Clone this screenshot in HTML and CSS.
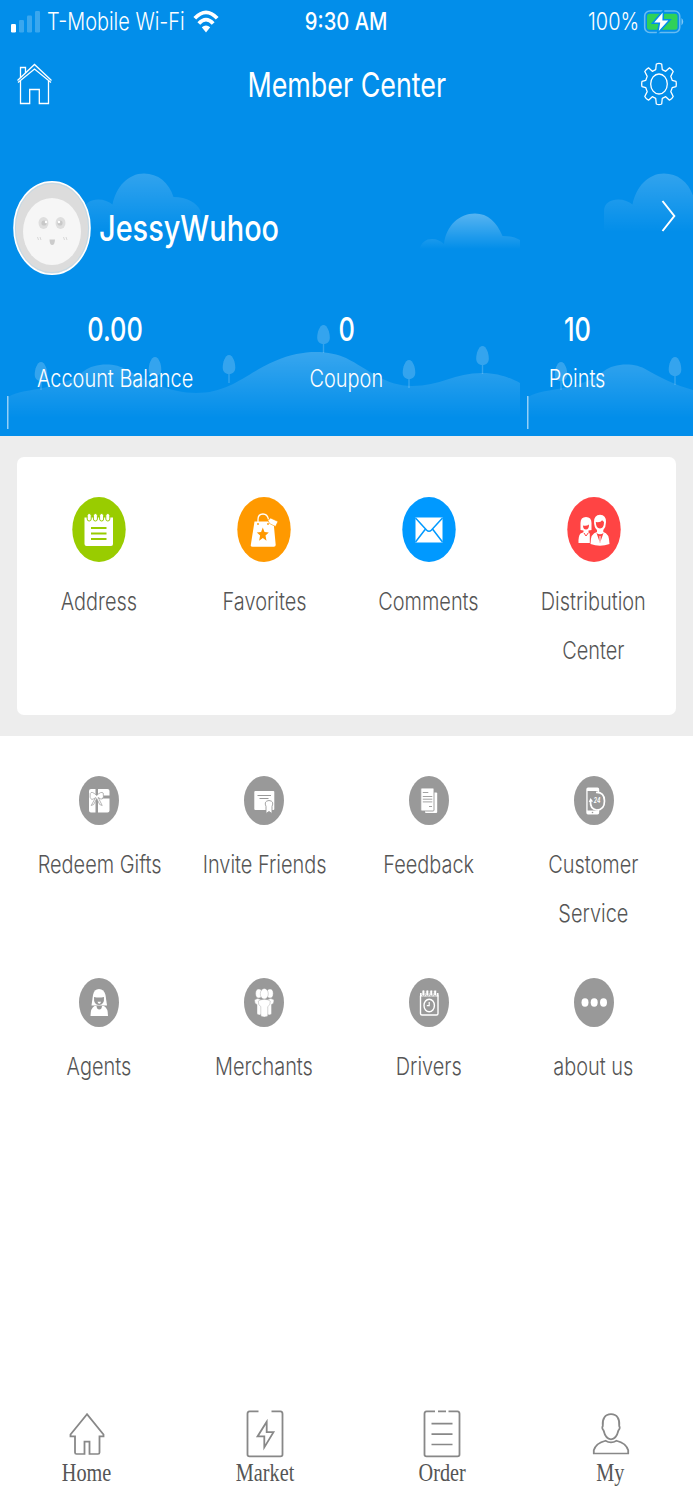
FILE: index.html
```html
<!DOCTYPE html>
<html lang="en">
<head>
<meta charset="utf-8">
<title>Member Center</title>
<link rel="stylesheet" href="styles.css">
</head>
<body>
<div class="app">
  <header class="hero">
    <svg class="scene" viewBox="0 0 693 436" width="693" height="436" aria-hidden="true">
      <defs>
        <linearGradient id="hill" gradientUnits="userSpaceOnUse" x1="0" y1="350" x2="0" y2="418">
          <stop offset="0" stop-color="#fff" stop-opacity=".22"/><stop offset=".5" stop-color="#fff" stop-opacity=".11"/><stop offset="1" stop-color="#fff" stop-opacity="0"/>
        </linearGradient>
        <linearGradient id="cloudA" gradientUnits="userSpaceOnUse" x1="0" y1="173" x2="0" y2="232">
          <stop offset="0" stop-color="#fff" stop-opacity=".19"/><stop offset="1" stop-color="#fff" stop-opacity="0"/>
        </linearGradient>
        <linearGradient id="cloudB" gradientUnits="userSpaceOnUse" x1="0" y1="213" x2="0" y2="249">
          <stop offset="0" stop-color="#fff" stop-opacity=".34"/><stop offset="1" stop-color="#fff" stop-opacity="0"/>
        </linearGradient>
        <g id="tree"><path d="M0-9.500C4-9.500 6.300-2 6.300 3 6.300 7 4 9.500 0 9.500S-6.300 7-6.300 3C-6.300-2-4-9.500 0-9.500z"/><path d="M-.7 9.500h1.400v9h-1.400z"/></g>
        <g id="tile">
          <path fill="url(#cloudA)" d="M84 232V211C84 203 91 199.500 98 199.500c6 0 11 2 14.500 5C116 187 128 173.500 144 173.500c14 0 25 9 29.500 23.500 13 0 24 6 27 14V232z"/>
          <path fill="url(#cloudB)" d="M419 251C421 242 426 239 432 239c5 0 9 2 12 5C446 226 459 213.500 475 213.500c13 0 22 9 27.500 22.500 8 0 13 1.500 17.500 4V251z"/>
          <path fill="url(#hill)" d="M8 397C18 391 30 391 45 387.500 64 384 76 378 84 371 94 363 115 362 127 370 145 380 170 393 196 393 230 393 245 374 275 361 305 348 330 351 346 358 368 369 385 386 412 386 440 386 455 373 482 373 500 373 512 379 520 383V418H8z"/>
          <g fill="#fff" fill-opacity=".2">
            <use href="#tree" x="41" y="371.500"/><use href="#tree" x="155" y="366.500"/><use href="#tree" x="229" y="364.500"/>
            <use href="#tree" x="323.500" y="334.500"/><use href="#tree" x="409" y="369.500"/><use href="#tree" x="482.500" y="355.500"/>
          </g>
          <path d="M7.800 396v33" stroke="#b9e0fb" stroke-width="1.200"/>
        </g>
      </defs>
      <use href="#tile"/><use href="#tile" x="520"/>
    </svg>

    <div class="status">
      <svg class="signal" viewBox="0 0 30 24" width="30" height="24"><g fill="#fff"><rect x="1" y="14" width="5" height="8.500" rx="1.200"/><g opacity=".22"><rect x="9" y="10" width="5" height="12.500" rx="1.200"/><rect x="17" y="5.500" width="5" height="17" rx="1.200"/><rect x="25" y="1" width="5" height="21.500" rx="1.200"/></g></g></svg>
      <div class="carrier"><span class="tight">T-Mobile Wi-Fi</span></div>
      <svg class="wifi" viewBox="0 0 26 24" width="26" height="24"><g fill="none" stroke="#fff" stroke-width="3.800"><path d="M1.800 9.300Q13-2.600 24.200 9.300"/><path d="M5.800 14.500Q13 6.600 20.200 14.500"/></g><path d="M13 23.500L8.800 18.300Q13 14.700 17.200 18.300z" fill="#fff"/></svg>
      <div class="time"><span class="tight">9:30 AM</span></div>
      <div class="percent"><span class="tight">100%</span></div>
      <svg class="battery" viewBox="0 0 42 24" width="42" height="24"><rect x="1.700" y="1" width="35" height="21.500" rx="5" fill="none" stroke="#fff" stroke-opacity=".4" stroke-width="1.600"/><path d="M38.500 8q3.500 3.700 0 7.500z" fill="#fff" opacity=".5"/><rect x="4" y="3.700" width="30.500" height="16" rx="2.500" fill="#30d158"/><path d="M20.500.5L9.500 13.300h6.800L14.500 23.500 27 9.800h-6.800z" fill="#fff" stroke="#028eea" stroke-width="1.600"/></svg>
    </div>

    <nav class="titlebar">
      <svg viewBox="0 0 36 44" width="36" height="44"><g fill="none" stroke="#fff" stroke-width="1.300"><path d="M1.500 18.500L18.500 2.500 35.500 18.500"/><path d="M2 20.500L18.500 7 35 20.500"/><path d="M4.500 16V5.500h5v5.500"/><path d="M4.500 19v22.500h9.200V27.500h9.600v14h9.200V19"/></g></svg>
      <h1><span class="tight">Member Center</span></h1>
      <svg class="gear" viewBox="0 0 36 44" width="36" height="44"><g fill="none" stroke="#fff" stroke-width="1.300" stroke-linejoin="round"><ellipse cx="18" cy="22" rx="8.300" ry="10"/><path d="M15.300 2Q18 .9 20.700 2L21.300 7.700 24.700 9.300 28.500 5.800Q31 7 32.200 9.500L29.800 14.400 31.200 18.300 35 19.300Q35.600 22 35 24.700L31.200 25.700 29.800 29.600 32.200 34.500Q31 37 28.500 38.200L24.700 34.700 21.300 36.300 20.700 42Q18 43.100 15.300 42L14.700 36.300 11.300 34.700 7.500 38.200Q5 37 3.800 34.500L6.200 29.600 4.800 25.700 1 24.700Q.4 22 1 19.300L4.800 18.300 6.200 14.400 3.800 9.500Q5 7 7.500 5.800L11.300 9.300 14.700 7.700z"/></g></svg>
    </nav>

    <section class="profile">
      <svg viewBox="0 0 78 94" width="78" height="94"><ellipse cx="39" cy="47" rx="38" ry="46.200" fill="#dcdcdc" stroke="#fff" stroke-width="1.600"/><ellipse cx="39" cy="47" rx="36.600" ry="44.600" fill="none" stroke="#a9d4ee" stroke-width=".5"/><ellipse cx="39" cy="50.500" rx="29" ry="33.500" fill="#f6f6f6"/><g fill="#dedede"><ellipse cx="30.500" cy="42" rx="5" ry="6"/><ellipse cx="47.500" cy="42" rx="5" ry="6"/></g><g fill="#c8c8c8"><circle cx="31" cy="42" r="2.600"/><circle cx="47" cy="42" r="2.600"/></g><g fill="#fff"><circle cx="33" cy="41" r="1.200"/><circle cx="46" cy="41" r="1.200"/></g><path d="M36.500 58.500h5.500q-.3 5.500-2.800 5.500t-2.700-5.500z" fill="#ccc"/><path d="M24.500 56l1 3M27 56l1 3M50.500 56l1 3M53 56l1 3" stroke="#d8d8d8"/></svg>
      <div class="name"><span class="tight">JessyWuhoo</span></div>
      <svg class="chevron" viewBox="0 0 16 34" width="16" height="34"><path d="M1.500 2L13.300 17 1.500 32" fill="none" stroke="#fff" stroke-width="2"/></svg>
    </section>

    <section class="stats">
      <div><b><span class="tight">0.00</span></b><p><span class="tight">Account Balance</span></p></div>
      <div><b><span class="tight">0</span></b><p><span class="tight">Coupon</span></p></div>
      <div><b><span class="tight">10</span></b><p><span class="tight">Points</span></p></div>
    </section>
  </header>

  <section class="panel">
    <div class="card grid">
      <div class="item">
        <svg viewBox="0 0 54 65" width="54" height="65"><ellipse cx="27" cy="32.500" rx="26.700" ry="32.500" fill="#9c0"/><path d="M12.500 20.500h28.500V47q0 2-2 2H14.500q-2 0-2-2z" fill="#fff"/><g fill="#fff" stroke="#9c0" stroke-width="1"><rect x="15.200" y="16.500" width="4" height="7.500" rx="2"/><rect x="21.400" y="16.500" width="4" height="7.500" rx="2"/><rect x="27.600" y="16.500" width="4" height="7.500" rx="2"/><rect x="33.800" y="16.500" width="4" height="7.500" rx="2"/></g><path d="M19 31h15.500M19 36.500h15.500M19 42h15.500" stroke="#9c0" stroke-width="2"/></svg>
        <p><span class="tight">Address</span></p>
      </div>
      <div class="item">
        <svg viewBox="0 0 54 65" width="54" height="65"><ellipse cx="27" cy="32.500" rx="26.700" ry="32.500" fill="#f90"/><path d="M17.500 24.500h19l2.200 23.500q0 1.800-1.800 1.800H15.500q-1.800 0-1.700-1.800z" fill="#fff"/><path d="M21 27v-4.500q0-5.500 5-5.500 4.500 0 5.500 5.500" fill="none" stroke="#fff" stroke-width="1.300"/><path d="M31 23.500l2.500-2.500 7.500 3.500-2.500 5-6-3z" fill="#fff" stroke="#f90" stroke-width=".6"/><circle cx="21" cy="27" r=".9" fill="#f90"/><circle cx="31" cy="27" r=".9" fill="#f90"/><path d="M25.800 30.500l1.700 4.600 4.300.3-3.300 3.200 1 5.200-3.700-2.900-3.700 2.900 1-5.200-3.300-3.200 4.300-.3z" fill="#f90"/></svg>
        <p><span class="tight">Favorites</span></p>
      </div>
      <div class="item">
        <svg viewBox="0 0 54 65" width="54" height="65"><ellipse cx="27" cy="32.500" rx="26.700" ry="32.500" fill="#09f"/><path d="M13.500 20.500h27v25h-27z" fill="#fff"/><path d="M13.500 21L24.500 33q2.500 2.500 5 0L40.500 21M13.500 45L23.500 32M40.500 45L30.500 32" fill="none" stroke="#09f" stroke-width="1.500"/></svg>
        <p><span class="tight">Comments</span></p>
      </div>
      <div class="item">
        <svg viewBox="0 0 54 65" width="54" height="65"><ellipse cx="27" cy="32.500" rx="26.700" ry="32.500" fill="#f44"/><g fill="#fff"><path d="M13.500 33V26q0-6 5.500-6t5.500 6v7l-3 .5v2.300l1.300.8v9.400H11.500q-.3-7 2-9.500l3-1.200v-1.800z"/><path d="M27 25q0-7 6-7.200 6.200.2 6 7.200 0 5-2.700 8v2q6 1 6.200 12-9.500 3.500-19 0Q23.500 36 30 35v-2q-3-3-3-8z"/></g><path d="M16 28.500q3.500.8 6-1 0 5-3 5t-3-4zM28.800 25q5 .7 6.300-1.800l1.900 1.800q0 6.500-4 6.500t-4.200-6.500zM29.500 36l3.500 10 3.500-10q-3.500 2.500-7 0z" fill="#f44"/><path d="M17 36l2 3 2.200-3" fill="none" stroke="#f44"/><path d="M33 39v6" stroke="#fff"/></svg>
        <p><span class="tight">Distribution<br>Center</span></p>
      </div>
    </div>
  </section>

  <section class="services grid">
    <div class="item">
      <svg viewBox="0 0 40 49" width="40" height="49"><ellipse cx="20" cy="24.500" rx="20" ry="24.500" fill="#999"/><path d="M12 13h4.500v23.500H12q-2 0-2-2V15q0-2 2-2zM19 13h9.500q2 0 2 2v4.500H19zM19 22.500h11.500v12q0 2-2 2H19z" fill="#fff"/><path d="M17.700 19.500q-5-5-6.500-2-1 4.500 1.500 6 2.500-.5 4-2l-4.500 8 2.500-1 3-6 3 6 2.500 1-4-8q2.500 2 4 1.500 2-1.500 1-6-2-2-6.500 2.500z" fill="#fff" stroke="#999" stroke-width=".7"/></svg>
      <p><span class="tight">Redeem Gifts</span></p>
    </div>
    <div class="item">
      <svg viewBox="0 0 40 49" width="40" height="49"><ellipse cx="20" cy="24.500" rx="20" ry="24.500" fill="#999"/><rect x="10.300" y="15" width="20" height="19" rx="1" fill="#fff"/><path d="M13.500 19.500h13.500M15.500 22.500h9" stroke="#999" stroke-width="1.100"/><path d="M22 37.500v-7q-2.500-5.500 3-6 5.500.5 3 6v7l-3-2z" fill="#fff" stroke="#999" stroke-width=".9"/></svg>
      <p><span class="tight">Invite Friends</span></p>
    </div>
    <div class="item">
      <svg viewBox="0 0 40 49" width="40" height="49"><ellipse cx="20" cy="24.500" rx="20" ry="24.500" fill="#999"/><rect x="16" y="16.500" width="12.200" height="20.500" rx="1" fill="#fff"/><rect x="11.800" y="12" width="13.200" height="23" rx="1" fill="#fff" stroke="#999" stroke-width=".9"/><path d="M13.800 16.500h5.500M13.800 20.500h9.500M13.800 23.200h9.500M13.800 25.900h9.500M20 30.500h3" stroke="#999" stroke-width=".9"/></svg>
      <p><span class="tight">Feedback</span></p>
    </div>
    <div class="item">
      <svg viewBox="0 0 40 49" width="40" height="49"><ellipse cx="20" cy="24.500" rx="20" ry="24.500" fill="#999"/><path d="M14 11.500h9.500q1.700 0 1.700 2v23q0 2-1.700 2H14q-1.700 0-1.700-2v-23q0-2 1.700-2zM13.600 15v19.500h10V15z" fill="#fff" fill-rule="evenodd"/><path d="M22 16.500q8.500-.5 8.500 8.500T22.500 34q-6.500-1-6-9" fill="#999" stroke="#fff" stroke-width="1.700"/><path d="M14.700 26l1.800-4 2.600 3.500z" fill="#fff"/><circle cx="18.500" cy="36.500" r=".8" fill="#999"/><text x="19.800" y="27" textLength="6.500" lengthAdjust="spacingAndGlyphs" class="badge24">24</text></svg>
      <p><span class="tight">Customer<br>Service</span></p>
    </div>
    <div class="item">
      <svg viewBox="0 0 40 49" width="40" height="49"><ellipse cx="20" cy="24.500" rx="20" ry="24.500" fill="#999"/><path d="M12.500 27.500L14 17q1-6 6-6t6.500 6L28 27.500z" fill="#fff"/><path d="M15 19q5 1 10 0 .5 8-5 8t-5-8z" fill="#999"/><path d="M18.500 23.700h3.500q-.5 2-1.700 2t-1.800-2z" fill="#fff"/><path d="M11.500 38q0-8 4-10h9.500q4 2 4 10z" fill="#fff"/><path d="M17.500 28h5.500q-.3 3.500-2.700 3.500T17.500 28z" fill="#999"/></svg>
      <p><span class="tight">Agents</span></p>
    </div>
    <div class="item">
      <svg viewBox="0 0 40 49" width="40" height="49"><ellipse cx="20" cy="24.500" rx="20" ry="24.500" fill="#999"/><g fill="#fff" stroke="#999" stroke-width=".4"><ellipse cx="14.800" cy="15.500" rx="3.200" ry="4.500"/><ellipse cx="26" cy="15.500" rx="3.200" ry="4.500"/><path d="M10.500 22q3-3 7 0V36q-2 2-4.500 0v-9.500q-2.500-.5-2.500-4.500zM30 22q-3-3-7 0V36q2 2 4.500 0v-9.500q2.500-.5 2.500-4.500z"/><ellipse cx="20.300" cy="15.800" rx="4" ry="5.300"/><path d="M14.300 23q6-3.500 12 0 .3 4.500-2.500 5.500V38q-3.500 2-7 0V28.500q-2.800-1-2.500-5.500z"/></g></svg>
      <p><span class="tight">Merchants</span></p>
    </div>
    <div class="item">
      <svg viewBox="0 0 40 49" width="40" height="49"><ellipse cx="20" cy="24.500" rx="20" ry="24.500" fill="#999"/><rect x="11.500" y="16.500" width="17.500" height="20.500" rx="1.500" fill="none" stroke="#fff" stroke-width="1.400"/><path d="M11 15h18.500v3.500H11z" fill="#fff"/><g fill="#fff" stroke="#999" stroke-width=".7"><rect x="13" y="12" width="2.800" height="6" rx="1.300"/><rect x="16.900" y="12" width="2.800" height="6" rx="1.300"/><rect x="20.800" y="12" width="2.800" height="6" rx="1.300"/><rect x="24.700" y="12" width="2.800" height="6" rx="1.300"/></g><ellipse cx="20.200" cy="27.500" rx="5.200" ry="6.300" fill="none" stroke="#fff" stroke-width="1.400"/><path d="M20.200 24v3.700h-2.400" fill="none" stroke="#fff" stroke-width="1.200"/></svg>
      <p><span class="tight">Drivers</span></p>
    </div>
    <div class="item">
      <svg viewBox="0 0 40 49" width="40" height="49"><ellipse cx="20" cy="24.500" rx="20" ry="24.500" fill="#999"/><g fill="#fff"><ellipse cx="11" cy="24.500" rx="3.500" ry="4.200"/><ellipse cx="20.200" cy="24.500" rx="3.500" ry="4.200"/><ellipse cx="29.500" cy="24.500" rx="3.500" ry="4.200"/></g></svg>
      <p><span class="tight">about us</span></p>
    </div>
  </section>

  <nav class="tabs">
    <a><svg preserveAspectRatio="none" viewBox="0 0 40 52.800" width="40" height="50"><path d="M20 5.500L3.500 27v2H8v17q0 1.500 1.500 1.500h8V34.500h5V47.500h8.500q1.500 0 1.500-1.500V29h4v-2z"/></svg><span class="tight">Home</span></a>
    <a><svg preserveAspectRatio="none" viewBox="0 0 40 52.800" width="40" height="50"><path d="M13.500 2.500H4.500Q2.500 2.500 2.500 5V48q0 2 2 2h31q2 0 2-2V5q0-2.500-2-2.500h-9M21.700 13.500L12.500 29h6.800V40.500L28.500 24.500h-6.800z"/></svg><span class="tight">Market</span></a>
    <a><svg preserveAspectRatio="none" viewBox="0 0 40 52.800" width="40" height="50"><path d="M13 2.500H4.500Q2.500 2.500 2.500 5V48q0 2 2 2h31q2 0 2-2V5q0-2.500-2-2.500h-9M16 2.500h8M9.500 15.500h21M9.500 26.500h21M9.500 37.500h21"/></svg><span class="tight">Order</span></a>
    <a><svg preserveAspectRatio="none" viewBox="0 0 40 52.800" width="40" height="50"><path d="M20 5.500c6 0 9 5 8.200 12.500 1 1 .5 3.500-.7 4.500C26 29 23.500 32 20 32s-6-3-7.500-9.500c-1.200-1-1.700-3.500-.7-4.500C11 10.500 14 5.500 20 5.500zM14.500 33.500Q20 37 25.500 33.500 35 36 37.200 43.500V47H2.800V43.500Q5 36 14.500 33.500z"/></svg><span class="tight">My</span></a>
  </nav>
</div>
</body>
</html>
```
FILE: styles.css
```css
* { box-sizing: border-box; }
body {
  margin: 0;
  background: #fff;
  font-family: Inter, "Liberation Sans", sans-serif;
  color: #555;
}
h1, p { margin: 0; font-weight: inherit; }
svg { display: block; flex: none; }

.app {
  width: 693px;
  height: 1500px;
  display: flex;
  flex-direction: column;
  overflow: hidden;
}

/* Horizontally condensed lettering */
.tight {
  display: inline-block;
  white-space: nowrap;
  transform: scaleX(.83);
}

.hero {
  position: relative;
  height: 436px;
  flex: none;
  background: #028eea;
  color: #fff;
}
.scene { position: absolute; left: 0; top: 0; }

.status, .titlebar, .profile, .stats { position: relative; }
.status {
  display: flex;
  align-items: center;
  height: 43px;
  padding: 0 8px 0 10px;
  font-size: 24px;
  font-weight: 350;
}
.carrier { width: 139px; margin-left: 7px; }
.carrier .tight, .name .tight, .percent .tight { transform-origin: left; }
.wifi { margin: -2px 0 0 7px; }
.time { width: 83px; margin-left: 86px; font-weight: 500; display: flex; justify-content: center; }
.time .tight { transform: scaleX(.84); }
.percent { width: 52px; margin-left: 200px; }
.battery { margin-left: 3px; }

.titlebar {
  display: flex;
  align-items: center;
  justify-content: space-between;
  height: 82px;
  padding: 0 16px;
}
.titlebar h1 { font-size: 34px; font-weight: 400; line-height: 44px; padding-top: 1px; }
.titlebar .tight { transform: scaleX(.79); }
.gear { margin-top: -1px; }

.profile {
  display: flex;
  align-items: center;
  height: 94px;
  margin-top: 56px;
  padding: 0 16px 0 13px;
}
.name { width: 180px; margin-left: 8px; font-size: 36px; font-weight: 500; }
.name .tight { transform: scaleX(.803); }
.chevron { margin: -24px 0 0 auto; }

.stats {
  display: grid;
  grid-template-columns: repeat(3, 1fr);
  margin-top: 29px;
  text-align: center;
}
.stats b, .stats p { display: block; line-height: 50px; }
.stats b { font-size: 33px; font-weight: 500; }
.stats b .tight { transform: scaleX(.77); }
.stats p { font-size: 24px; font-weight: 350; }

.panel {
  flex: none;
  height: 300px;
  padding: 21px 17px;
  background: #ededed;
}
.card { height: 258px; padding-top: 40px; border-radius: 7px; background: #fff; }
.grid { display: grid; grid-template-columns: repeat(4, 1fr); align-content: start; }
.item {
  display: flex;
  flex-direction: column;
  align-items: center;
  gap: 15px;
  text-align: center;
  font-size: 24px;
  font-weight: 350;
  line-height: 49px;
}
.services { padding: 40px 17px 0; row-gap: 40px; }
.badge24 { font: italic 700 7px Inter, sans-serif; fill: #fff; }

.tabs {
  display: grid;
  grid-template-columns: 174px 182px 172px 1fr;
  margin-top: auto;
  height: 93px;
  padding-top: 2px;
  font-family: "Liberation Serif", serif;
  font-size: 25px;
  line-height: 28px;
}
.tabs a { display: flex; flex-direction: column; align-items: center; }
.tabs .tight { transform: scaleX(.81); }
.tabs svg { fill: none; stroke: #888; stroke-width: 1.800; overflow: visible; }
```
